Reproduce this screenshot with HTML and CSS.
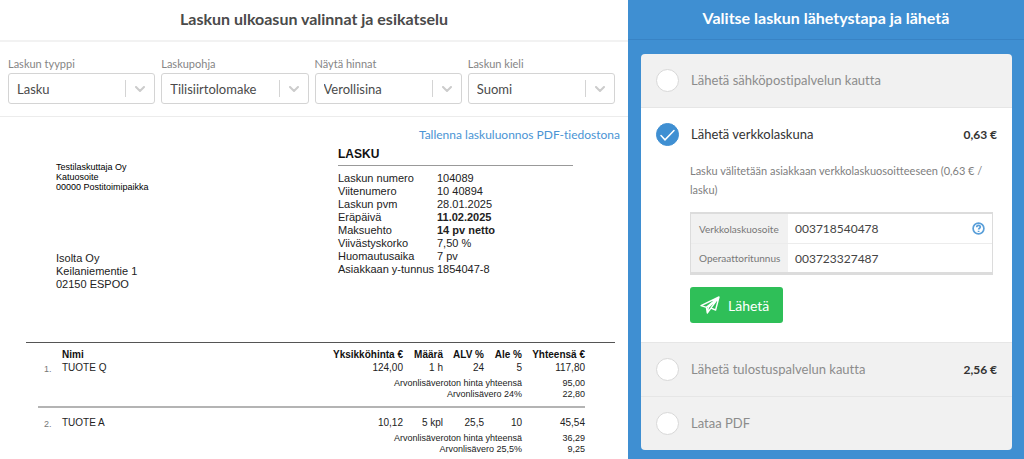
FILE: index.html
```html
<!DOCTYPE html>
<html lang="fi">
<head>
<meta charset="utf-8">
<title>Laskun lähetys</title>
<link rel="stylesheet" href="styles.css">
</head>
<body>
<div class="page">
  <main class="preview">
    <h1 class="panel-title">Laskun ulkoasun valinnat ja esikatselu</h1>
    <form class="filters">
      <div class="field">
        <label for="type">Laskun tyyppi</label>
        <div class="select"><select id="type"><option>Lasku</option></select><svg class="chevron" viewBox="0 0 10 6"><path d="M1 1l4 4 4-4"/></svg></div>
      </div>
      <div class="field">
        <label for="template">Laskupohja</label>
        <div class="select"><select id="template"><option>Tilisiirtolomake</option></select><svg class="chevron" viewBox="0 0 10 6"><path d="M1 1l4 4 4-4"/></svg></div>
      </div>
      <div class="field">
        <label for="prices">Näytä hinnat</label>
        <div class="select"><select id="prices"><option>Verollisina</option></select><svg class="chevron" viewBox="0 0 10 6"><path d="M1 1l4 4 4-4"/></svg></div>
      </div>
      <div class="field">
        <label for="language">Laskun kieli</label>
        <div class="select"><select id="language"><option>Suomi</option></select><svg class="chevron" viewBox="0 0 10 6"><path d="M1 1l4 4 4-4"/></svg></div>
      </div>
    </form>
    <a class="save-link" href="#pdf">Tallenna laskuluonnos PDF-tiedostona</a>

    <article class="invoice">
      <div class="invoice-top">
        <div class="parties">
          <address class="sender">Testilaskuttaja Oy<br>Katuosoite<br>00000 Postitoimipaikka</address>
          <address class="recipient">Isolta Oy<br>Keilaniementie 1<br>02150 ESPOO</address>
        </div>
        <section class="details">
          <h2>LASKU</h2>
          <dl>
            <dt>Laskun numero</dt><dd>104089</dd>
            <dt>Viitenumero</dt><dd>10 40894</dd>
            <dt>Laskun pvm</dt><dd>28.01.2025</dd>
            <dt>Eräpäivä</dt><dd><b>11.02.2025</b></dd>
            <dt>Maksuehto</dt><dd><b>14 pv netto</b></dd>
            <dt>Viivästyskorko</dt><dd>7,50 %</dd>
            <dt>Huomautusaika</dt><dd>7 pv</dd>
            <dt>Asiakkaan y-tunnus</dt><dd>1854047-8</dd>
          </dl>
        </section>
      </div>
      <div class="items-wrap">
        <table class="items">
          <colgroup><col class="c-no"><col><col class="c-price"><col class="c-qty"><col class="c-vat"><col class="c-disc"><col class="c-total"></colgroup>
          <thead>
            <tr><th></th><th class="name">Nimi</th><th>Yksikköhinta €</th><th>Määrä</th><th>ALV %</th><th>Ale %</th><th>Yhteensä €</th></tr>
          </thead>
          <tbody>
            <tr><td class="no">1.</td><td class="name">TUOTE Q</td><td>124,00</td><td>1 h</td><td>24</td><td>5</td><td>117,80</td></tr>
            <tr class="sub first"><td colspan="6">Arvonlisäveroton hinta yhteensä</td><td>95,00</td></tr>
            <tr class="sub last"><td colspan="6">Arvonlisävero 24%</td><td>22,80</td></tr>
          </tbody>
          <tbody class="next">
            <tr><td class="no">2.</td><td class="name">TUOTE A</td><td>10,12</td><td>5 kpl</td><td>25,5</td><td>10</td><td>45,54</td></tr>
            <tr class="sub first"><td colspan="6">Arvonlisäveroton hinta yhteensä</td><td>36,29</td></tr>
            <tr class="sub"><td colspan="6">Arvonlisävero 25,5%</td><td>9,25</td></tr>
          </tbody>
        </table>
      </div>
    </article>
  </main>

  <aside class="sending">
    <h1 class="panel-title">Valitse laskun lähetystapa ja lähetä</h1>
    <form class="card">
      <div class="option">
        <label class="choice"><input type="radio" name="method"><span class="choice-name">Lähetä sähköpostipalvelun kautta</span></label>
      </div>
      <div class="option selected">
        <label class="choice"><span class="radio"><input type="radio" name="method" checked><svg class="tick" viewBox="0 0 23 23"><path d="M5 12.5l4 4.300 9-9.300"/></svg></span><span class="choice-name">Lähetä verkkolaskuna</span><strong class="price">0,63 €</strong></label>
        <div class="choice-body">
          <p>Lasku välitetään asiakkaan verkkolaskuosoitteeseen (0,63 € / lasku)</p>
          <table class="address-table">
            <tr><th scope="row">Verkkolaskuosoite</th><td><div class="cell">003718540478<button type="button" class="help" aria-label="Ohje"><svg viewBox="0 0 13 13"><circle cx="6.500" cy="6.500" r="5.400"/><path d="M4.700 5.200c.1-2.600 3.700-2.300 3.600-.2 0 1.200-1.700 1.300-1.700 2.600"/><path d="M6.600 8.800v1.200"/></svg></button></div></td></tr>
            <tr><th scope="row">Operaattoritunnus</th><td>003723327487</td></tr>
          </table>
          <button type="submit" class="send"><svg viewBox="0 0 20 18"><path d="M1 9.700L19 1l-3.400 13-4.700-1.800L7.300 17l-.9-5.700zM19 1L6.400 11.300M19 1L8.300 11.500 7.300 17M19 1l-8.100 11.200"/></svg>Lähetä</button>
        </div>
      </div>
      <div class="option">
        <label class="choice"><input type="radio" name="method"><span class="choice-name">Lähetä tulostuspalvelun kautta</span><strong class="price">2,56 €</strong></label>
      </div>
      <div class="option">
        <label class="choice"><input type="radio" name="method"><span class="choice-name">Lataa PDF</span></label>
      </div>
    </form>
  </aside>
</div>
</body>
</html>
```
FILE: styles.css
```css
* { box-sizing: border-box; }
body {
  margin: 0;
  font-family: Lato, "Liberation Sans", sans-serif;
  font-size: 13px;
  font-variant-ligatures: none;
  color: #4a4a4a;
  background: #fff;
}
.page {
  display: grid;
  grid-template-columns: 157fr 99fr;
  min-height: 100vh;
}
.panel-title {
  margin: 0;
  font-size: 16px;
  font-weight: 700;
  line-height: 20px;
  padding: 9px 12px 11px;
  text-align: center;
}

.preview { display: flex; flex-direction: column; }
.preview .panel-title { border-bottom: 2px solid #f2f2f2; }
.filters {
  display: grid;
  grid-template-columns: repeat(4, 1fr);
  gap: 6px;
  padding: 14px 13px 12px 8px;
  border-bottom: 1px solid #ececec;
}
.field { display: flex; flex-direction: column; gap: 1px; }
.field label { font-size: 11px; line-height: 16px; color: #858585; }
.select { position: relative; }
.select::before {
  content: "";
  position: absolute;
  right: 29px;
  top: 7px;
  bottom: 7px;
  width: 1px;
  background: #d4d4d4;
}
select {
  appearance: none;
  display: block;
  width: 100%;
  height: 31px;
  padding: 0 32px 0 8px;
  border: 1px solid #d4d4d4;
  border-radius: 3px;
  background: #fff;
  color: inherit;
  font: inherit;
}
.chevron {
  position: absolute;
  right: 10px;
  top: 13px;
  width: 10px;
  height: 6px;
  fill: none;
  stroke: #ccc;
  stroke-width: 2;
  stroke-linecap: round;
  pointer-events: none;
}
.save-link {
  align-self: flex-end;
  padding: 10px 8px 0 0;
  font-size: 12px;
  line-height: 16px;
  color: #4a94d4;
  text-decoration: none;
}

.invoice { font-family: "Liberation Sans", Arial, sans-serif; color: #222; }
.invoice-top {
  display: grid;
  grid-template-columns: 282fr 290fr;
  padding: 4px 0 0 56px;
}
.sender, .recipient { font-style: normal; }
.sender { padding-top: 15px; font-size: 9px; line-height: 10px; color: #000; }
.recipient { padding-top: 60px; font-size: 11px; line-height: 13px; }
.details { padding-right: 55px; }
.details h2 {
  margin: 0 0 6px;
  padding-bottom: 4px;
  border-bottom: 1px solid #999;
  font-size: 12px;
  line-height: 14px;
  color: #111;
}
.details dl {
  display: grid;
  grid-template-columns: 99px 1fr;
  margin: 0;
  font-size: 11px;
  line-height: 13px;
}
.details dt { white-space: nowrap; }
.details dd { margin: 0; }
.items-wrap {
  margin: 51px 13px 0 26px;
  padding: 5px 30px 0 12px;
  border-top: 1px solid #555;
}
.items {
  width: 100%;
  border-collapse: collapse;
  table-layout: fixed;
  font-size: 10px;
  line-height: 13px;
}
.c-no { width: 24px; }
.c-price { width: 76px; }
.c-qty { width: 40px; }
.c-vat { width: 41px; }
.c-disc { width: 38px; }
.c-total { width: 63px; }
.items th, .items td { padding: 0; text-align: right; vertical-align: top; white-space: nowrap; }
.items th { color: #111; }
.items .name { text-align: left; }
.items td.no { padding: 2px 0 0 6px; text-align: left; font-size: 9px; color: #777; }
.items .sub td { font-size: 9px; line-height: 11px; }
.items .first td { padding-top: 2px; }
.items .last td { padding-bottom: 6px; }
.next { border-top: 2px solid #b4b4b4; }
.items .next tr:first-child td { padding-top: 8px; }
.items .next tr:first-child td.no { padding-top: 10px; }

.sending { background: #3f8fd2; color: #fff; }
.sending .panel-title { padding-top: 8px; border-bottom: 1px solid #3883c5; }
.card {
  margin: 14px 12px 9px 13px;
  border-radius: 4px;
  overflow: hidden;
  background: #f1f1f1;
  color: #8c8c8c;
}
.option + .option { border-top: 1px solid #e6e6e6; }
.selected { background: #fff; }
.choice {
  display: flex;
  align-items: center;
  gap: 12px;
  padding: 15px;
  line-height: 23px;
}
.selected .choice { color: #333; }
.radio { position: relative; display: flex; }
.choice input {
  appearance: none;
  width: 23px;
  height: 23px;
  margin: 0;
  border: 1px solid #d8d8d8;
  border-radius: 50%;
  background: #fff;
}
.choice input:checked { border-color: #3f8fd2; background: #3f8fd2; }
.tick {
  position: absolute;
  inset: 0;
  fill: none;
  stroke: #fff;
  stroke-width: 1.500;
  stroke-linecap: round;
}
.choice-name { flex: 1; }
.price { font-size: 12px; color: #333; }
.choice-body { padding: 0 19px 19px 49px; }
.choice-body p { margin: 0 0 13px; font-size: 11px; line-height: 19px; color: #808080; }
.address-table {
  width: 100%;
  margin-bottom: 12px;
  border: 1px solid #dcdcdc;
  border-width: 2px 1px 3px;
  border-collapse: separate;
  border-spacing: 0;
  color: #444;
  font-size: 12px;
}
.address-table th, .address-table td { height: 29px; padding: 0 7px; text-align: left; }
.address-table tr + tr > * { border-top: 1px solid #ececec; }
.address-table th { width: 97px; padding-left: 8px; background: #f1f1f1; font-size: 10px; font-weight: 400; color: #777; }
.cell { display: flex; align-items: center; justify-content: space-between; }
.help { display: flex; padding: 0; border: 0; background: none; }
.help svg { width: 13px; height: 13px; fill: none; stroke: #5a9fd9; stroke-width: 1.700; }
.send {
  display: flex;
  align-items: center;
  gap: 8px;
  height: 36px;
  padding: 0 14px 0 10px;
  border: 0;
  border-radius: 3px;
  background: #2fbf58;
  color: #fff;
  font: 14px Lato, sans-serif;
}
.send svg { width: 20px; height: 18px; fill: none; stroke: #fff; stroke-width: 1.400; stroke-linejoin: round; }
```
